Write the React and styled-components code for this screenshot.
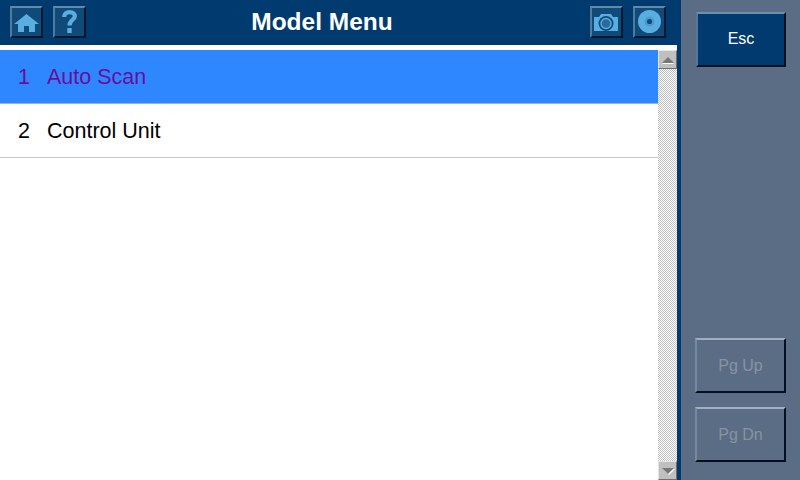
import styled, { createGlobalStyle } from "styled-components"

const GlobalStyle = createGlobalStyle`
  html, body {
    margin: 0;
    padding: 0;
    background: #5b6d85;
  }
`

const Screen = styled.div`
  display: flex;
  width: 800px;
  height: 480px;
  overflow: hidden;
  font-family: "Liberation Sans", Arial, sans-serif;
`

const Main = styled.div`
  display: flex;
  flex-flow: column;
  flex: none;
  width: 681px;
  border-right: 4px solid #003a6e;
  box-sizing: border-box;
  background: #fff;
`

const Header = styled.div`
  display: flex;
  align-items: center;
  justify-content: space-between;
  box-sizing: border-box;
  height: 45px;
  padding: 0 11px 2px 10px;
  background: #003a6e;
`

const Title = styled.h1`
  margin: 0 32px 0 0;
  color: #fff;
  font-size: 24.5px;
  font-weight: bold;
`

const IconGroup = styled.div`
  display: flex;
  gap: 10px;
`

const IconButton = styled.div`
  display: flex;
  align-items: center;
  justify-content: center;
  box-sizing: border-box;
  width: 33px;
  height: 32px;
  padding-top: ${(p) => (p.$low ? "3px" : "0")};
  background: #104a79;
  border-style: solid;
  border-width: 2px;
  border-color: #5f8aa8 #01172c #01172c #4d7c9c;
`

const Body = styled.div`
  display: flex;
  flex: 1;
  margin-top: 5px;
  min-height: 0;
`

const List = styled.div`
  flex: 1;
`

const Row = styled.div`
  display: flex;
  align-items: center;
  box-sizing: border-box;
  height: 54px;
  padding: 2px 0 0 18px;
  font-size: 21.5px;
  color: ${(p) => (p.$selected ? "#6a0d9c" : "#000")};
  background: ${(p) => (p.$selected ? "#2f87ff" : "#fff")};
  border-bottom: 1px solid ${(p) => (p.$selected ? "#8db4e8" : "#c8c8c8")};
`

const RowNumber = styled.span`
  width: 29px;
`

const Scrollbar = styled.div`
  display: flex;
  flex-flow: column;
  width: 19px;
`

const ScrollTrack = styled.div`
  flex: 1;
  background-color: #fff;
  background-image: conic-gradient(#c0c0c0 25%, #fff 0 50%, #c0c0c0 0 75%, #fff 0);
  background-size: 2px 2px;
`

const ScrollButton = styled.div`
  display: flex;
  align-items: center;
  justify-content: center;
  box-sizing: border-box;
  height: 19px;
  background: #c0c0c0;
  border-style: solid;
  border-width: 1px;
  border-color: #e4e4e4 #6f6f6f #6f6f6f #e4e4e4;
`

const Arrow = styled.div`
  width: 0;
  height: 0;
  border-left: 6px solid transparent;
  border-right: 6px solid transparent;
  ${(p) => (p.$down ? "border-top: 6px solid #777;" : "border-bottom: 6px solid #777;")}
  filter: drop-shadow(${(p) => (p.$down ? "1px 1px" : "0 1px")} 0 #fff);
`

const Sidebar = styled.div`
  display: flex;
  flex-flow: column;
  flex: 1;
  padding: 12px 14px 18px 14px;
  background: #5b6d85;
`

const SideButton = styled.div`
  display: flex;
  align-items: center;
  justify-content: center;
  box-sizing: border-box;
  width: ${(p) => (p.$disabled ? "91px" : "90px")};
  height: 55px;
  margin-left: ${(p) => (p.$disabled ? "0" : "1px")};
  padding-bottom: ${(p) => (p.$disabled ? "0" : "1px")};
  font-size: 16px;
  color: ${(p) => (p.$disabled ? "#8793a2" : "#fff")};
  background: ${(p) => (p.$disabled ? "#5b6d85" : "#003a6e")};
  border-style: solid;
  border-width: 2px;
  border-color: ${(p) =>
    p.$disabled
      ? "#a3afbd #01101f #01101f #77899c"
      : "#6e90ac #01101f #01101f #53789a"};
`

const Spacer = styled.div`
  flex: 1;
`

const PageButtons = styled.div`
  display: flex;
  flex-flow: column;
  gap: 14px;
`

const ICON = "#58aee0"

function HomeIcon() {
  return (
    <svg width="25" height="18" viewBox="0 0 25 18">
      <path fill={ICON} d="M12.5 0 L25 10 H21 V18 H15 V12 H10 V18 H4 V10 H0 Z" />
    </svg>
  )
}

function HelpIcon() {
  return (
    <svg width="15" height="23" viewBox="0 0 15 23">
      <path
        fill="none"
        stroke={ICON}
        strokeWidth="4.2"
        d="M2.2 7 C2.2 3.8 4.4 2.1 7.5 2.1 C10.6 2.1 12.8 3.8 12.8 6.2 C12.8 9.8 7.5 10 7.5 15.5"
      />
      <rect x="5.3" y="18" width="4.4" height="5" fill={ICON} />
    </svg>
  )
}

function CameraIcon() {
  return (
    <svg width="24" height="18" viewBox="0 0 24 18">
      <path fill={ICON} d="M0 3 H5 L7 0 H17 L19 3 H24 V17 H0 Z" />
      <circle cx="12" cy="9.5" r="7.5" fill="#104a79" />
      <circle cx="12" cy="9.5" r="5" fill="#2a6a9a" stroke={ICON} strokeWidth="1.4" />
    </svg>
  )
}

function DiscIcon() {
  return (
    <svg width="23" height="23" viewBox="0 0 23 23">
      <circle cx="11.5" cy="11.5" r="11.5" fill={ICON} />
      <circle cx="11.5" cy="11.5" r="5" fill="#4a9ccd" />
      <circle cx="11.5" cy="11.5" r="2.6" fill="#104a79" />
    </svg>
  )
}

function App() {
  return (
    <>
      <GlobalStyle />
      <Screen>
        <Main>
          <Header>
            <IconGroup>
              <IconButton $low><HomeIcon /></IconButton>
              <IconButton><HelpIcon /></IconButton>
            </IconGroup>
            <Title>Model Menu</Title>
            <IconGroup>
              <IconButton $low><CameraIcon /></IconButton>
              <IconButton><DiscIcon /></IconButton>
            </IconGroup>
          </Header>
          <Body>
            <List>
              <Row $selected><RowNumber>1</RowNumber>Auto Scan</Row>
              <Row><RowNumber>2</RowNumber>Control Unit</Row>
            </List>
            <Scrollbar>
              <ScrollButton><Arrow /></ScrollButton>
              <ScrollTrack />
              <ScrollButton><Arrow $down /></ScrollButton>
            </Scrollbar>
          </Body>
        </Main>
        <Sidebar>
          <SideButton>Esc</SideButton>
          <Spacer />
          <PageButtons>
            <SideButton $disabled>Pg Up</SideButton>
            <SideButton $disabled>Pg Dn</SideButton>
          </PageButtons>
        </Sidebar>
      </Screen>
    </>
  )
}

export default App
